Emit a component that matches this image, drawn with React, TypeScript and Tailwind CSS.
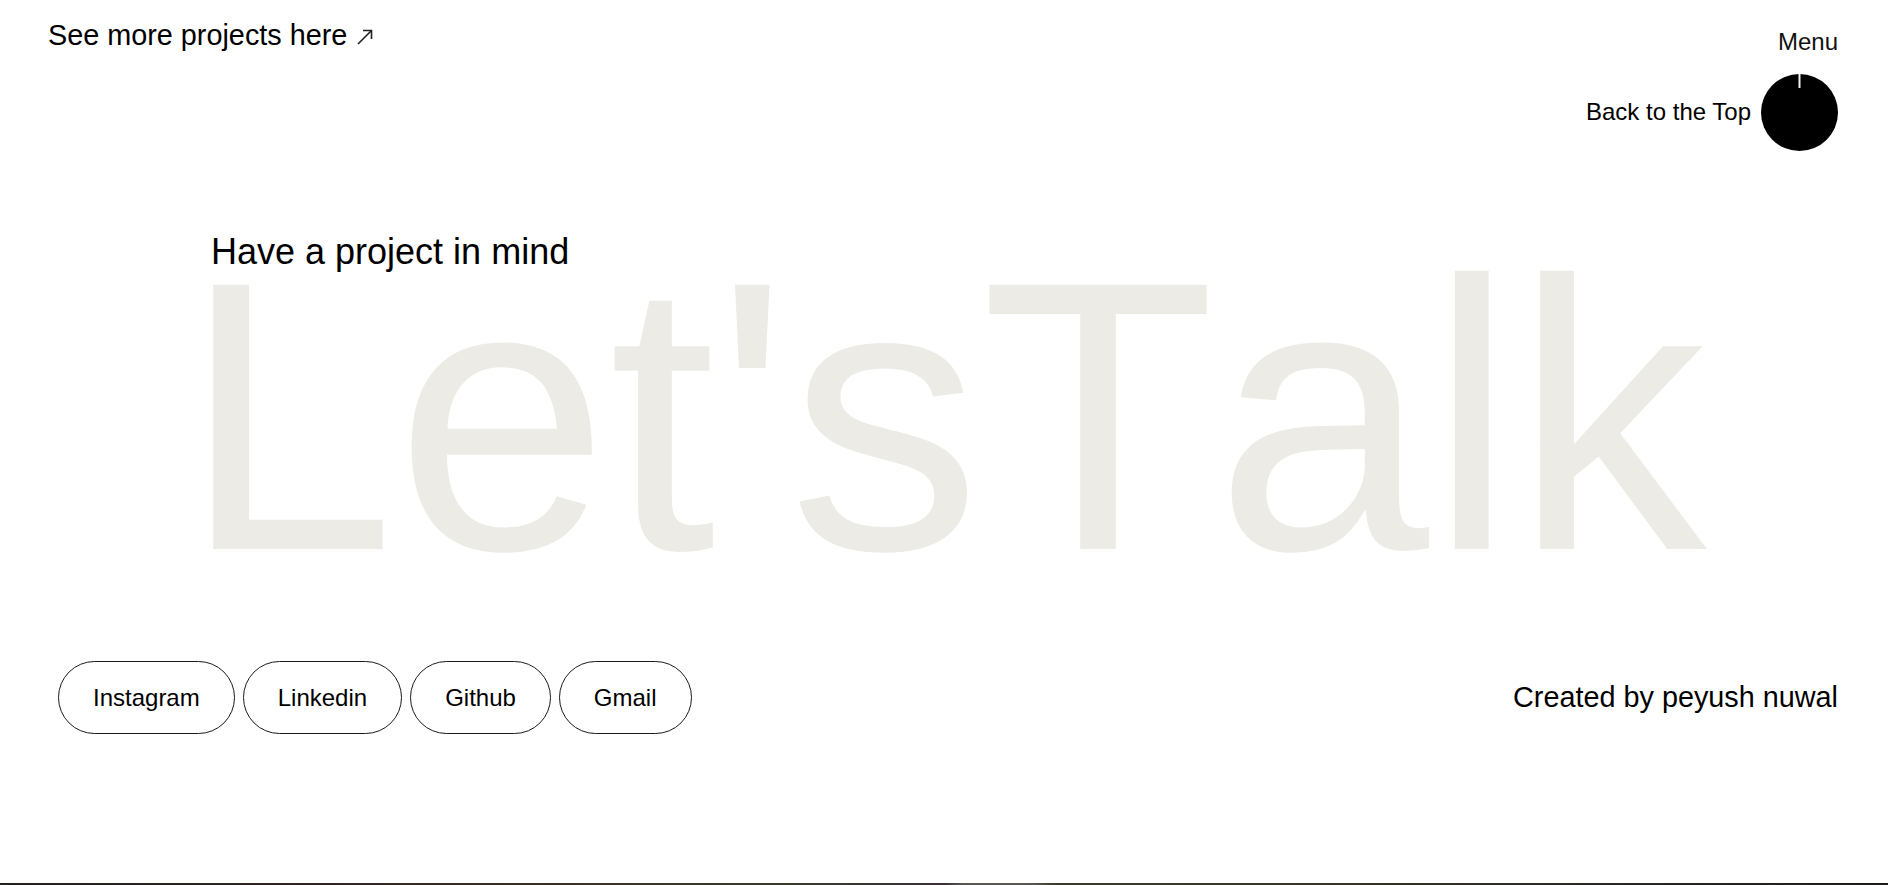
import type { ReactNode } from 'react';

const socials = ['Instagram', 'Linkedin', 'Github', 'Gmail'];

function ArrowUpRight() {
  return (
    <svg width="18" height="18" viewBox="0 0 18 18" fill="none" className="ml-[9px] inline-block align-[-1px]">
      <path d="M2 16 15.5 2.5" stroke="#1f1f1f" strokeWidth="1.6" />
      <path d="M7 2.5h8.5V11" stroke="#1f1f1f" strokeWidth="1.6" />
    </svg>
  );
}

function ScrollDial() {
  return (
    <svg width="77" height="77" viewBox="0 0 77 77">
      <circle cx="38.5" cy="38.5" r="38.5" fill="#000" />
      <line x1="38.5" y1="0" x2="38.5" y2="14" stroke="#f2f2f2" strokeWidth="2" />
    </svg>
  );
}

function Pill({ children }: { children: ReactNode }) {
  return (
    <a
      href="#"
      className="flex h-[73px] items-center rounded-full border border-[#1a1a1a] px-[34px] text-[24px] leading-none text-black"
    >
      {children}
    </a>
  );
}

export default function App() {
  return (
    <div className="bg-white font-['Liberation_Sans',Arial,sans-serif] text-black">
      <div className="flex h-[883px] flex-col">
        <header className="flex items-start justify-between pl-12 pr-[50px]">
          <a href="#" className="pt-[19px] text-[28.8px] leading-[33px]">
            See more projects here
            <ArrowUpRight />
          </a>
          <div className="flex flex-col items-end pt-[28px]">
            <button className="text-[24px] leading-[27px] text-[#111]">Menu</button>
            <div className="mt-[19px] flex items-center gap-[10px]">
              <span className="-mt-[2px] text-[24px] leading-[27px]">Back to the Top</span>
              <ScrollDial />
            </div>
          </div>
        </header>

        <section className="mt-[81px]">
          <h2 className="pl-[211px] text-[36px] leading-[40px]">Have a project in mind</h2>
          <div className="-mt-[48px] flex justify-center">
            <span className="text-[384px] leading-none whitespace-nowrap text-[#ecebe6] select-none [font-kerning:none]">
              Let'sTalk
            </span>
          </div>
        </section>

        <footer className="mt-[53px] flex items-center justify-between pl-[58px] pr-[50px]">
          <nav className="flex items-center gap-[8px]">
            {socials.map((s) => (
              <Pill key={s}>{s}</Pill>
            ))}
          </nav>
          <p className="text-[28.8px] leading-[33px]">Created by peyush nuwal</p>
        </footer>
      </div>
      <div className="h-[240px] bg-[linear-gradient(90deg,#241f1d_0%,#2e2522_15%,#3a3128_30%,#3d3a30_42%,#3a3036_50%,#5b5753_51%,#5b5753_54.5%,#3e3a2e_56%,#3a3428_70%,#2b2724_85%,#1c1a19_100%)]" />
    </div>
  );
}
